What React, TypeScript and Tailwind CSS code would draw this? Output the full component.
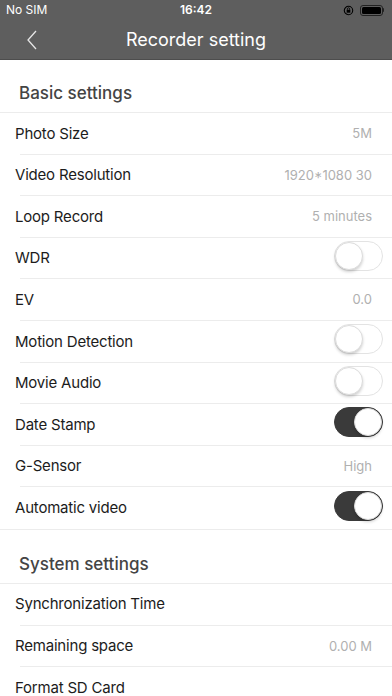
import { useState } from 'react';

type Row = { label: string; value?: string; toggle?: boolean };

const basic: Row[] = [
  { label: 'Photo Size', value: '5M' },
  { label: 'Video Resolution', value: '1920*1080 30' },
  { label: 'Loop Record', value: '5 minutes' },
  { label: 'WDR', toggle: false },
  { label: 'EV', value: '0.0' },
  { label: 'Motion Detection', toggle: false },
  { label: 'Movie Audio', toggle: false },
  { label: 'Date Stamp', toggle: true },
  { label: 'G-Sensor', value: 'High' },
  { label: 'Automatic video', toggle: true },
];

const system: Row[] = [
  { label: 'Synchronization Time' },
  { label: 'Remaining space', value: '0.00 M' },
  { label: 'Format SD Card' },
];

function Toggle({ initial }: { initial: boolean }) {
  const [on, setOn] = useState(initial);
  return (
    <button
      onClick={() => setOn(!on)}
      className={`relative w-[49px] h-[30px] rounded-full border ${
        on ? 'bg-[#3a3a3a] border-[#3a3a3a]' : 'bg-white border-[#e3e3e3]'
      }`}
    >
      <span
        className={`absolute top-[0px] w-[28px] h-[28px] rounded-full bg-white border border-[#dcdcdc] shadow-[0_2px_3px_rgba(0,0,0,0.18)] ${
          on ? 'right-[0px]' : 'left-[0px]'
        }`}
      />
    </button>
  );
}

function SettingRow({ row, last }: { row: Row; last: boolean }) {
  return (
    <div className="relative h-[41.6px] flex items-center pl-[15px]">
      <span className="flex-1 text-[15px] tracking-[-0.2px] text-[#1c1c1c]">{row.label}</span>
      {row.toggle !== undefined ? (
        <div className="pr-[9px]">
          <Toggle initial={row.toggle} />
        </div>
      ) : (
        <span className="pr-[20px] text-[13px] text-[#b0b0b0]">{row.value}</span>
      )}
      {!last && <div className="absolute bottom-0 left-[20px] right-0 h-px bg-[#ececec]" />}
    </div>
  );
}

function Section({ title, rows, tall }: { title: string; rows: Row[]; tall?: boolean }) {
  return (
    <div>
      <div
        className={`${tall ? 'h-[54px] pb-[5px]' : 'h-[53px] pb-[6px]'} flex items-end pl-[19px] border-b border-[#ececec]`}
      >
        <span className="text-[17px] font-medium text-[#444]">{title}</span>
      </div>
      <div className="border-b border-[#ececec]">
        {rows.map((r, i) => (
          <SettingRow key={r.label} row={r} last={i === rows.length - 1} />
        ))}
      </div>
    </div>
  );
}

export default function App() {
  return (
    <div
      className="w-[392px] h-[696px] overflow-hidden bg-white"
      style={{ fontFamily: 'Inter, "Noto Sans", sans-serif' }}
    >
      <div className="bg-[#5e5e5e] text-white">
        <div className="h-[20px] flex items-center px-[6px] text-[12px] relative">
          <span>No SIM</span>
          <span className="absolute left-0 right-0 text-center font-semibold">16:42</span>
          <div className="ml-auto flex items-center gap-[6px] pr-[2px]">
            <svg width="11" height="11" viewBox="0 0 12 12">
              <circle cx="6" cy="6" r="4.6" fill="none" stroke="#000" strokeWidth="1.2" />
              <rect x="4" y="5.2" width="4" height="3.2" fill="#000" />
              <path d="M4.8 5.2 V4.2 a1.2 1.2 0 0 1 2.4 0 V5.2" fill="none" stroke="#000" strokeWidth="0.9" />
            </svg>
            <div className="flex items-center">
              <div className="w-[23px] h-[11px] rounded-[3px] border border-[#222] p-[1px]">
                <div className="w-full h-full bg-black rounded-[1.5px]" />
              </div>
              <div className="w-[1.5px] h-[4px] bg-[#222] rounded-r" />
            </div>
          </div>
        </div>
        <div className="h-[40px] flex items-center relative border-b border-[#4d4d4d]">
          <svg className="ml-[25px]" width="14" height="22" viewBox="0 0 14 22">
            <path d="M11 2 L3 11 L11 20" fill="none" stroke="#e6e6e6" strokeWidth="1.3" />
          </svg>
          <span className="absolute left-0 right-0 text-center text-[18px]">Recorder setting</span>
        </div>
      </div>
      <Section title="Basic settings" rows={basic} />
      <Section title="System settings" rows={system} tall />
    </div>
  );
}
